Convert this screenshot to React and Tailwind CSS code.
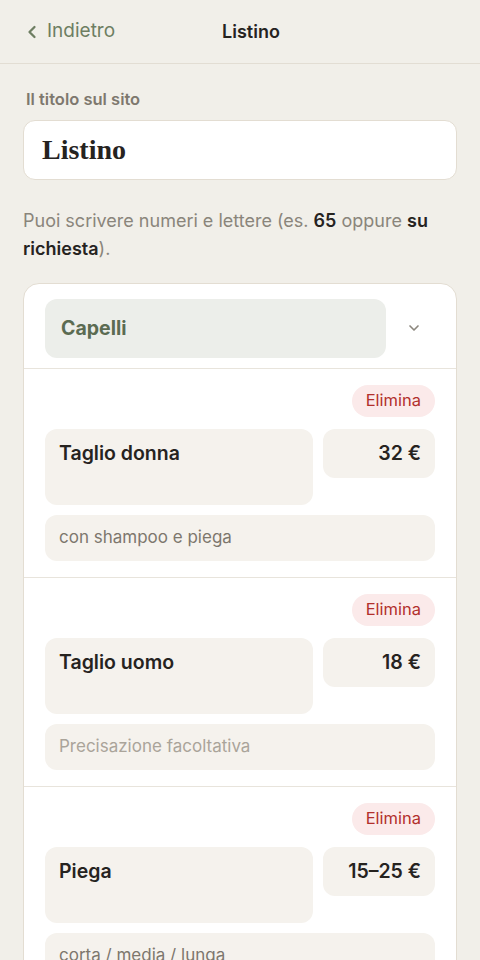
import { ChevronLeft, ChevronDown } from 'lucide-react';

const items = [
  { name: 'Taglio donna', price: '32 €', note: 'con shampoo e piega' },
  { name: 'Taglio uomo', price: '18 €', note: '' },
  { name: 'Piega', price: '15–25 €', note: 'corta / media / lunga' },
];

const ItemRow = ({ item }) => (
  <div className="border-t border-[#e8e4dc] px-[21px] pt-4 pb-4">
    <div className="flex justify-end">
      <button className="h-8 rounded-full bg-[#fbeaea] px-[14px] text-[16.5px] text-[#b2302c]">
        Elimina
      </button>
    </div>
    <div className="mt-3 flex gap-[10px]">
      <div className="h-[76px] flex-1 rounded-xl bg-[#f5f2ed] px-[14px] pt-[12px] text-[19.5px] font-semibold leading-[24px] text-[#26231f]">
        {item.name}
      </div>
      <div className="h-[49px] w-[112px] rounded-xl bg-[#f5f2ed] px-[14px] pt-[12px] text-right text-[19.5px] font-semibold leading-[24px] text-[#26231f]">
        {item.price}
      </div>
    </div>
    <div className="mt-[10px] flex h-[46px] items-center rounded-xl bg-[#f5f2ed] px-[14px] text-[17px]">
      {item.note ? (
        <span className="text-[#7d776d]">{item.note}</span>
      ) : (
        <span className="text-[#aaa49a]">Precisazione facoltativa</span>
      )}
    </div>
  </div>
);

const App = () => {
  return (
    <div className="min-h-screen bg-[#f1efe9] text-[#26231f]" style={{ fontFamily: 'Inter, "Noto Sans", sans-serif' }}>
      <header className="relative flex h-[64px] items-center border-b border-[#e2ddd3] px-6">
        <button className="flex items-center gap-[5px] text-[19px] text-[#6e7e62]">
          <ChevronLeft className="h-[20px] w-[20px] -ml-[2px]" strokeWidth={2.75} />
          Indietro
        </button>
        <h1 className="pointer-events-none absolute left-0 right-0 pl-[22px] text-center text-[18px] font-semibold text-[#26231f]">
          Listino
        </h1>
      </header>

      <main className="px-[23px] pt-[23px]">
        <label className="block pl-[3px] text-[16.5px] font-semibold text-[#7e786e]">
          Il titolo sul sito
        </label>
        <div className="mt-[8px] flex h-[60px] items-center rounded-xl border border-[#e3ddd2] bg-white px-[18px]">
          <span className="text-[28px] font-bold text-[#26231f]" style={{ fontFamily: '"Liberation Serif", "DejaVu Serif", serif' }}>
            Listino
          </span>
        </div>

        <p className="mt-[27px] text-[18px] leading-[28px] text-[#8a857b]">
          Puoi scrivere numeri e lettere (es. <b className="font-semibold text-[#26231f]">65</b> oppure{' '}
          <b className="font-semibold text-[#26231f]">su richiesta</b>).
        </p>

        <section className="mt-[20px] overflow-hidden rounded-2xl border border-[#e3ddd2] bg-white">
          <div className="flex items-center pl-[21px] pr-[14px] pt-[15px] pb-[10px]">
            <div className="flex h-[59px] flex-1 items-center rounded-xl bg-[#eceeea] px-[16px] text-[19.5px] font-bold text-[#5b6b52]">
              Capelli
            </div>
            <div className="flex w-[56px] justify-center">
              <ChevronDown className="h-[16px] w-[16px] text-[#8c877e]" strokeWidth={2.5} />
            </div>
          </div>
          {items.map((item, i) => (
            <ItemRow key={i} item={item} />
          ))}
        </section>
      </main>
    </div>
  );
};

export default App;
